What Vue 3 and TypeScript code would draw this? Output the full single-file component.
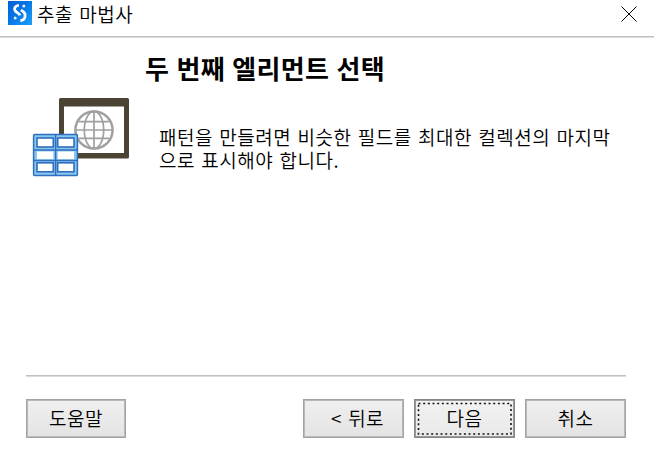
<script setup lang="ts">
import { ref } from "vue";

interface WizardButton { id: string; label: string }

const windowTitle = "추출 마법사";
const heading = "두 번째 엘리먼트 선택";
const message = "패턴을 만들려면 비슷한 필드를 최대한 컬렉션의 마지막으로 표시해야 합니다.";
const buttons: WizardButton[] = [
  { id: "back", label: "< 뒤로" },
  { id: "next", label: "다음" },
  { id: "cancel", label: "취소" },
];
const focused = ref("next");

// table cells of the collection icon
const cols = [12, 32.7];
const rows = [48, 72.8];
</script>

<template>
  <div class="wizard">
    <header class="titlebar">
      <svg class="logo" width="24" height="24" viewBox="0 0 24 24">
        <defs>
          <linearGradient id="logoBg" x1="0" y1="0" x2="1" y2="1">
            <stop offset="0" stop-color="#0060d4" />
            <stop offset=".5" stop-color="#0878e8" />
            <stop offset="1" stop-color="#1ba0fa" />
          </linearGradient>
        </defs>
        <rect width="24" height="24" fill="url(#logoBg)" />
        <path d="M11 4.3C7.2 4.3 5.6 7.6 7.2 9.9C8.5 11.7 11.3 12 12 14.4" />
        <path d="M12.8 9.2C15.8 10.4 17.5 12.2 17.1 15.2C16.6 18 14.9 19.5 12.4 19.5" />
        <circle cx="15.8" cy="5" r="1.5" />
        <circle cx="7.2" cy="17" r="1.5" />
      </svg>
      <span class="title">{{ windowTitle }}</span>
      <svg class="close" width="16" height="16" viewBox="0 0 16 16">
        <path d="M.5 .5L15.5 15.5M15.5 .5L.5 15.5" />
      </svg>
    </header>

    <main class="content">
      <svg class="picture" width="115" height="95" viewBox="0 0 115 95">
        <rect x="34" y="8" width="70" height="60.5" rx="1.5" fill="#4b4433" />
        <rect x="39" y="16.5" width="60" height="46.5" fill="#fff" />
        <g fill="none" stroke="#a0a0a0" stroke-width="1.7">
          <circle cx="69" cy="40" r="18.6" stroke-width="2.5" />
          <ellipse cx="69" cy="40" rx="9.7" ry="18.6" />
          <path d="M69 21V59M50 40H88M54 31.7H84M54 48.3H84" />
        </g>
        <rect x="8.6" y="44.6" width="43.8" height="40.8" rx="1" class="grid" />
        <path d="M30.6 44.6V85.4M8.6 60H52.4M8.6 70.4H52.4" class="grid" />
        <g v-for="x in cols" :key="x">
          <rect v-for="y in rows" :key="y" :x="x" :y="y" width="16.3" height="9" class="cell" />
          <rect :x="x" y="61.5" width="16.3" height="7.6" fill="#fff" />
        </g>
      </svg>
      <div class="copy">
        <h1>{{ heading }}</h1>
        <p>{{ message }}</p>
      </div>
    </main>

    <footer class="footer">
      <button type="button" class="help">도움말</button>
      <div class="nav">
        <button
          v-for="b in buttons" :key="b.id" type="button"
          :class="[b.id, { focused: focused === b.id }]"
          @click="focused = b.id"
        >
          {{ b.label }}
          <svg v-if="focused === b.id" class="ring" width="99" height="37">
            <rect x="3.5" y="3.5" width="92.5" height="30.5" />
          </svg>
        </button>
      </div>
    </footer>
  </div>
</template>

<style>
body { margin: 0; background: #fff; }
</style>

<style scoped>
.wizard {
  display: flex; flex-direction: column; box-sizing: border-box;
  width: 654px; height: 454px; overflow: hidden; background: #fff; color: #000;
  font: 350 19px/23px "Noto Sans CJK KR", "Noto Sans", sans-serif;
  letter-spacing: .5px; word-spacing: 1.6px;
}
.titlebar {
  display: flex; align-items: flex-start; box-sizing: border-box; height: 38px;
  padding: 1px 17px 0 8px; border-bottom: 1px solid #dcdcde; box-shadow: inset 0 -1px #bfbfc5;
}
.logo path { fill: none; stroke: #fff; stroke-width: 2.8; stroke-linecap: butt; }
.logo circle { fill: #e4f1ff; }
.title { flex: 1; margin: 1px 0 0 5px; }
.close { margin-top: 5px; }
.close path { stroke: #000; stroke-width: 1; }
.content { display: flex; flex: 1; padding: 12px 26px 0 25px; }
.picture { flex: none; margin-top: 40px; }
.grid { fill: #8bc6ee; stroke: #2f6fc0; stroke-width: 1.5; }
.cell { fill: #fff; stroke: #2f6fc0; stroke-width: 1.6; }
.copy { margin-left: 5px; }
h1 { margin: 0; font-size: 26px; line-height: 36px; font-weight: 700; letter-spacing: .4px; word-spacing: .8px; }
p { width: 457px; margin: 39px 0 0 14px; word-break: break-all; }
.footer {
  display: flex; justify-content: space-between; box-sizing: border-box;
  height: 79px; margin: 0 28px 0 26px; padding-top: 23px;
  border-top: 1px solid #bebebe; box-shadow: inset 0 1px #dadada;
}
.nav { display: flex; gap: 10px; }
button {
  position: relative; box-sizing: border-box; width: 101px; height: 39px; padding: 0 0 2px;
  border: 1px solid #a3a3a3; border-radius: 0; box-shadow: inset 0 0 0 1px #b9b9b9;
  background: linear-gradient(#f0f0f0, #e3e3e3); color: #000;
  font: inherit; letter-spacing: inherit; word-spacing: inherit;
}
.help { width: 100px; }
.back { padding-left: 8px; }
.focused { border-color: #858585; box-shadow: inset 0 0 0 1px #999; background: linear-gradient(#f2f2f2, #e9e9e9); }
.ring { position: absolute; left: 0; top: 0; }
.ring rect { fill: none; stroke: #111; stroke-width: 1.6; stroke-dasharray: 2 2.67; }
</style>
